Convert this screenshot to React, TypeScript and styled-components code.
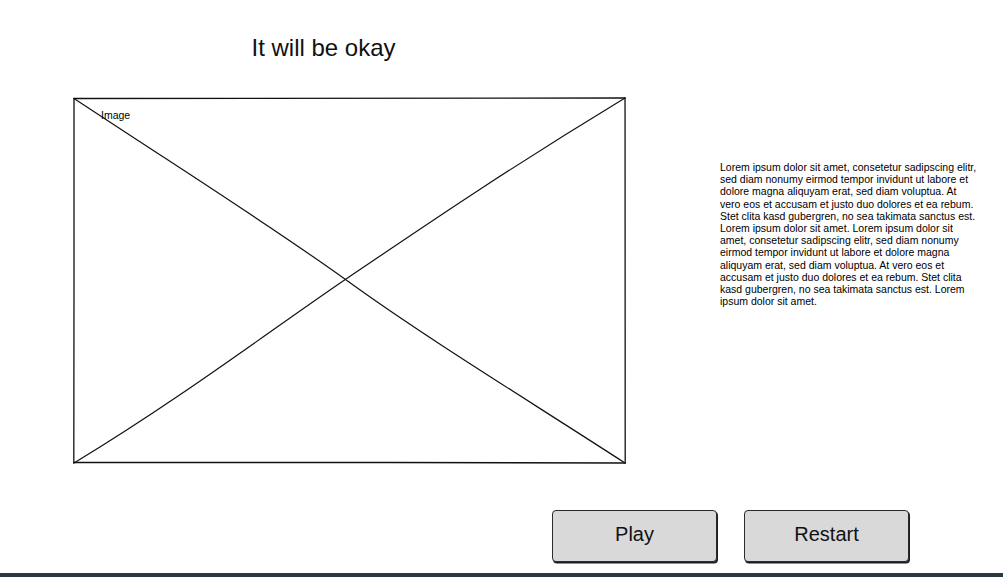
import React from "react";
import styled, { createGlobalStyle } from "styled-components";

const GlobalStyle = createGlobalStyle`
  html, body { margin: 0; padding: 0; background: #ffffff; }
  body { font-family: "Liberation Sans", Arial, sans-serif; color: #000; }
`;

const Page = styled.div`
  width: 1003px;
  height: 577px;
  display: flex;
  flex-direction: column;
  overflow: hidden;
  background: #fff;
`;

const Header = styled.header`
  height: 97px;
  display: flex;
  justify-content: flex-start;
`;

const Title = styled.h1`
  margin: 34px 0 0 0;
  width: 647px;
  text-align: center;
  font-weight: 400;
  font-size: 24px;
  line-height: 28px;
  color: #111;
`;

const Main = styled.main`
  display: flex;
  align-items: flex-start;
  padding-left: 73px;
`;

const ImageBox = styled.div`
  position: relative;
  width: 553px;
  height: 367px;
  flex: none;
`;

const Sketch = styled.svg`
  display: block;
  width: 100%;
  height: 100%;
`;

const ImageLabel = styled.span`
  position: absolute;
  left: 28px;
  top: 12px;
  font-size: 10.5px;
  line-height: 13px;
  color: #000;
`;

const Description = styled.p`
  margin: 64px 0 0 94px;
  width: 258px;
  font-size: 10.5px;
  line-height: 12.2px;
  color: #000;
`;

const Actions = styled.div`
  display: flex;
  justify-content: flex-end;
  gap: 27px;
  padding-right: 94px;
  margin-top: 46px;
`;

const SketchButton = styled.button`
  width: 165px;
  height: 52px;
  background: #d9d9d9;
  border: 1.5px solid #2a2a2a;
  border-radius: 4px;
  box-shadow: 1px 1.5px 0 #1f1f1f;
  font-family: "Liberation Sans", Arial, sans-serif;
  font-size: 20px;
  color: #111;
  padding: 0 0 4px 0;
  cursor: pointer;
`;

const Spacer = styled.div`
  flex: 1;
`;

const BottomBar = styled.footer`
  height: 4px;
  background: #263a40;
  flex: none;
`;

const lorem =
  "Lorem ipsum dolor sit amet, consetetur sadipscing elitr, sed diam nonumy eirmod tempor invidunt ut labore et dolore magna aliquyam erat, sed diam voluptua. At vero eos et accusam et justo duo dolores et ea rebum. Stet clita kasd gubergren, no sea takimata sanctus est. Lorem ipsum dolor sit amet. Lorem ipsum dolor sit amet, consetetur sadipscing elitr, sed diam nonumy eirmod tempor invidunt ut labore et dolore magna aliquyam erat, sed diam voluptua. At vero eos et accusam et justo duo dolores et ea rebum. Stet clita kasd gubergren, no sea takimata sanctus est. Lorem ipsum dolor sit amet.";

const PlaceholderSketch: React.FC = () => (
  <Sketch viewBox="0 0 553 367" fill="none" stroke="#111" strokeLinecap="round">
    <path d="M1 1.5 C 120 0.8, 300 2.2, 552 1" strokeWidth="1.3" />
    <path d="M1 365.5 C 150 366.2, 380 364.8, 552 366" strokeWidth="1.3" />
    <path d="M1 1.5 C 0.6 120, 1.6 250, 0.8 366" strokeWidth="1.3" />
    <path d="M552 1 C 552.6 130, 551.4 260, 552.2 366" strokeWidth="1.3" />
    <path d="M1 1.5 C 120 80, 200 130, 276 185 S 450 300, 552 366" strokeWidth="1.2" />
    <path d="M552 1 C 430 75, 350 130, 276 180 S 110 300, 1 366" strokeWidth="1.2" />
  </Sketch>
);

export default function App() {
  return (
    <>
      <GlobalStyle />
      <Page>
        <Header>
          <Title>It will be okay</Title>
        </Header>
        <Main>
          <ImageBox>
            <PlaceholderSketch />
            <ImageLabel>Image</ImageLabel>
          </ImageBox>
          <Description>{lorem}</Description>
        </Main>
        <Actions>
          <SketchButton>Play</SketchButton>
          <SketchButton>Restart</SketchButton>
        </Actions>
        <Spacer />
        <BottomBar />
      </Page>
    </>
  );
}
